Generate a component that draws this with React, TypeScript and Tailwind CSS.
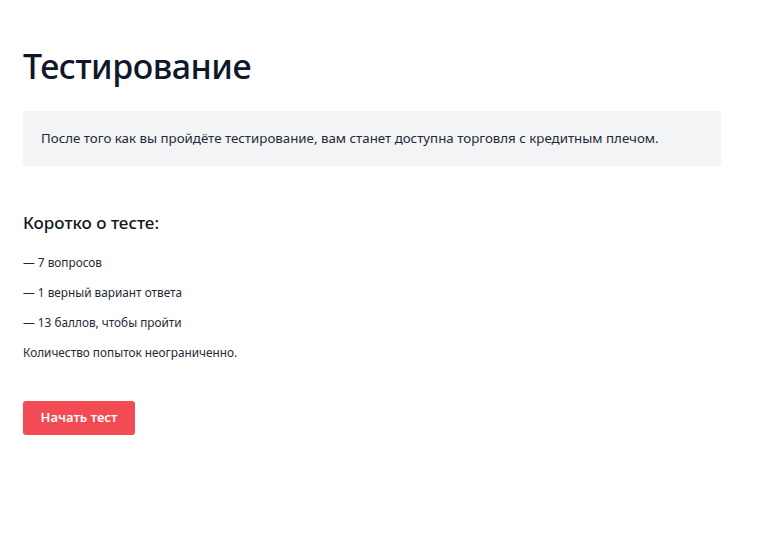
export default function App() {
  return (
    <div
      className="min-h-screen bg-white text-[#111827]"
      style={{ fontFamily: '"Noto Sans", "Open Sans", sans-serif' }}
    >
      <div className="w-[698px] ml-[23px] pt-[41px]">
        {/* Header */}
        <h1 className="text-[34px] leading-[51px] font-medium text-[#0f172a] tracking-[-0.5px]">
          Тестирование
        </h1>

        <div className="mt-[19px] h-[55px] flex items-center px-[18px] bg-[#f3f4f6] rounded-[4px]">
          <p className="text-[13.3px] text-[#1f2937]">
            После того как вы пройдёте тестирование, вам станет доступна торговля с кредитным плечом.
          </p>
        </div>

        {/* About */}
        <h2 className="mt-[44px] text-[17px] leading-[26px] font-medium text-[#111827]">
          Коротко о тесте:
        </h2>

        <ul className="mt-[17px] flex flex-col gap-[12px] text-[11.8px] leading-[18px] text-[#1f2937]">
          <li>— 7 вопросов</li>
          <li>— 1 верный вариант ответа</li>
          <li>— 13 баллов, чтобы пройти</li>
          <li>Количество попыток неограниченно.</li>
        </ul>

        <button className="mt-[40px] w-[112px] h-[34px] rounded-[3px] bg-[#f24b53] text-white text-[13px] font-semibold">
          Начать тест
        </button>
      </div>
    </div>
  );
}
